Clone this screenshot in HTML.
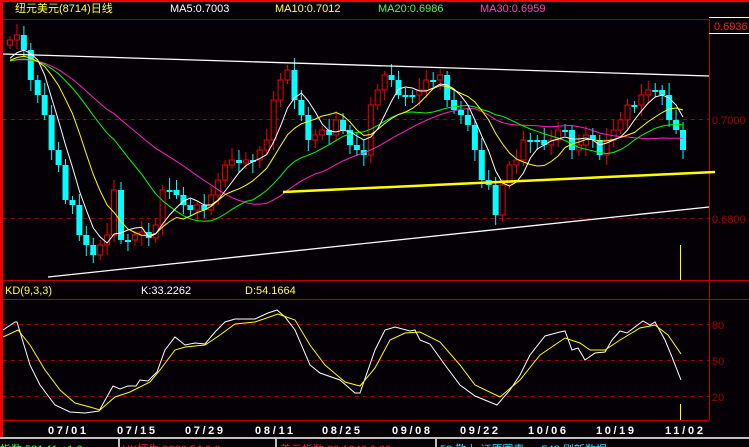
<!DOCTYPE html>
<html><head><meta charset="utf-8"><style>
html,body{margin:0;padding:0;background:#050005;width:749px;height:447px;overflow:hidden}
svg{display:block}
text{font-family:"Liberation Sans","Noto Sans CJK SC",sans-serif;font-size:11px}
.d{font-family:"Liberation Mono",monospace;font-weight:bold;font-size:14px;fill:#fff}
</style></head><body>
<svg id="s" width="749" height="447" xmlns="http://www.w3.org/2000/svg">
<rect width="749" height="447" fill="#050005"/>
<rect x="0" y="0" width="749" height="2" fill="#f00000"/>
<rect x="0" y="0" width="3" height="437" fill="#f00000"/>
<line x1="3" y1="19.5" x2="709" y2="19.5" stroke="#a00000"/>
<line x1="709.5" y1="19" x2="709.5" y2="420" stroke="#c00000"/>
<line x1="709" y1="17.5" x2="749" y2="17.5" stroke="#fff"/>
<line x1="709" y1="33.5" x2="749" y2="33.5" stroke="#fff"/>
<text x="714" y="30" fill="#ff2020" font-size="12">0.6936</text>
<text x="15" y="12" fill="#ffff40" font-size="12">纽元美元(8714)日线</text>
<text x="170" y="12" fill="#fff">MA5:0.7003</text>
<text x="275" y="12" fill="#ffff40">MA10:0.7012</text>
<text x="378" y="12" fill="#40ff40">MA20:0.6986</text>
<text x="480" y="12" fill="#ff40c0">MA30:0.6959</text>
<g stroke="#a00000" stroke-dasharray="4,4">
<line x1="3" y1="119.5" x2="709" y2="119.5"/><line x1="3" y1="218.5" x2="709" y2="218.5"/>
<line x1="3" y1="324.5" x2="709" y2="324.5"/><line x1="3" y1="360.5" x2="709" y2="360.5"/><line x1="3" y1="396.5" x2="709" y2="396.5"/>
</g>
<g fill="#a00000" font-size="12"><text x="712" y="124">0.7000</text><text x="712" y="223">0.6800</text>
<text x="712" y="329">80</text><text x="712" y="365">50</text><text x="712" y="401">20</text></g>
<line x1="3" y1="280.5" x2="749" y2="280.5" stroke="#c00000"/>
<line x1="3" y1="299.5" x2="749" y2="299.5" stroke="#c00000"/>
<line x1="3" y1="420.5" x2="709" y2="420.5" stroke="#c00000"/>
<text x="5" y="294" fill="#ffff40">KD(9,3,3)</text>
<text x="141" y="294" fill="#fff">K:33.2262</text>
<text x="245" y="294" fill="#ffff40">D:54.1664</text>
<g id="cd"></g>
<polyline points="3,54 709,76" stroke="#fff" stroke-width="1.3" fill="none"/>
<polyline points="48,277 709,207" stroke="#fff" stroke-width="1.3" fill="none"/>
<polyline points="283,192 715,172" stroke="#ffff00" stroke-width="2.5" fill="none"/>
<line x1="680.5" y1="245" x2="680.5" y2="280" stroke="#ffff00"/>
<line x1="680.5" y1="404" x2="680.5" y2="420" stroke="#ffff00"/>
<polyline fill="none" stroke="#fff" points="3,330 15,322 17,322 30,365 40,385 55,405 70,412 85,413 99,411 113,386 120,389 128,386 136,386 140,380 148,381 157,372 165,350 175,337 185,345 195,343 205,344 215,332 225,322 235,319 255,319 268,313 277,310 285,317 295,330 310,365 320,373 340,380 355,393 360,393 375,350 385,330 395,327 410,331 415,330 420,340 430,344 445,365 460,385 475,396 497,405 510,390 520,375 530,355 545,336 560,332 565,331 572,350 578,348 585,360 595,353 605,352 612,340 620,331 627,333 643,321 650,325 655,322 665,340 672,357 681,380"/>
<polyline fill="none" stroke="#ffff00" points="3,337 18,330 30,345 45,370 60,390 75,403 90,407 100,410 115,397 130,392 150,382 160,370 175,350 185,347 205,345 220,335 235,324 255,322 278,314 295,320 310,345 325,365 345,382 360,386 375,368 390,340 405,333 420,332 440,342 460,365 475,385 500,397 520,380 540,355 565,338 580,343 590,350 605,350 620,340 640,328 655,325 668,335 681,354"/>
<g class="d"><text x="48" y="434" textLength="38">07/01</text><text x="117" y="434" textLength="38">07/15</text><text x="185" y="434" textLength="38">07/29</text><text x="255" y="434" textLength="38">08/11</text><text x="322" y="434" textLength="38">08/25</text><text x="392" y="434" textLength="38">09/08</text><text x="460" y="434" textLength="38">09/22</text><text x="528" y="434" textLength="38">10/06</text><text x="596" y="434" textLength="38">10/19</text><text x="665" y="434" textLength="38">11/02</text></g>
<rect x="0" y="437" width="749" height="10" fill="#050005"/>
<line x1="0" y1="438" x2="749" y2="438" stroke="#c0c0c0" stroke-width="2"/>
<line x1="119" y1="438" x2="119" y2="447" stroke="#c0c0c0" stroke-width="2"/>
<line x1="276" y1="438" x2="276" y2="447" stroke="#c0c0c0" stroke-width="2"/>
<line x1="436" y1="438" x2="436" y2="447" stroke="#c0c0c0" stroke-width="2"/>
<g font-size="14"><text x="0" y="453" fill="#40ff40">指数 581.11 +1.0</text>
<text x="122" y="453" fill="#ff2020">HK恒生 9880.54 8.9</text>
<text x="280" y="453" fill="#ff2020">美元指数 80.1246 0.09</text>
<text x="440" y="453" fill="#30e0ff">58 敬上 证原国表 — 548 刷新数据</text></g>
</svg>
<script>
var c=[40,35,50,80,95,115,150,165,200,205,235,245,255,245,235,190,240,240,235,232,238,225,190,190,195,205,210,205,210,195,180,165,160,163,160,160,150,140,100,80,70,100,115,140,135,130,135,120,130,145,150,155,105,90,75,80,95,95,95,90,80,80,75,100,110,115,125,150,180,185,215,185,165,160,140,140,140,145,140,130,130,150,145,135,140,155,140,130,120,105,105,95,90,90,95,120,130,150];
var pre=[];for(var i=0;i<30;i++)pre.push(60+i*0.1);
var all=pre.concat(c),n=c.length,sp=(683-10)/(n-1);
var g=document.getElementById('cd'),h='';
for(var i=0;i<n;i++){var x=10+i*sp,o=(i?c[i-1]:45),cl=c[i],t=Math.min(o,cl),b=Math.max(o,cl);
 if(b-t<2){b=t+2}var wt=t-4-(i*7%9),wb=b+4+(i*5%8);
 if(cl<o){h+='<line x1="'+x+'" y1="'+wt+'" x2="'+x+'" y2="'+wb+'" stroke="#f00000"/><rect x="'+(x-2.5)+'" y="'+t+'" width="5" height="'+(b-t)+'" fill="#050005" stroke="#f00000"/>';}
 else{h+='<line x1="'+x+'" y1="'+wt+'" x2="'+x+'" y2="'+wb+'" stroke="#00ffff"/><rect x="'+(x-3)+'" y="'+t+'" width="6" height="'+(b-t)+'" fill="#00ffff"/>';}}
var cols={5:'#fff',10:'#ffff00',20:'#00ff00',30:'#ff20c0'};
[30,20,10,5].forEach(function(p){var pts=[];for(var i=0;i<n;i++){var s=0;for(var k=0;k<p;k++)s+=all[30+i-k];pts.push((10+i*sp).toFixed(1)+','+(s/p).toFixed(1));}
 h+='<polyline fill="none" stroke="'+cols[p]+'" points="'+pts.join(' ')+'"/>';});
g.innerHTML=h;
</script>
</body></html>
